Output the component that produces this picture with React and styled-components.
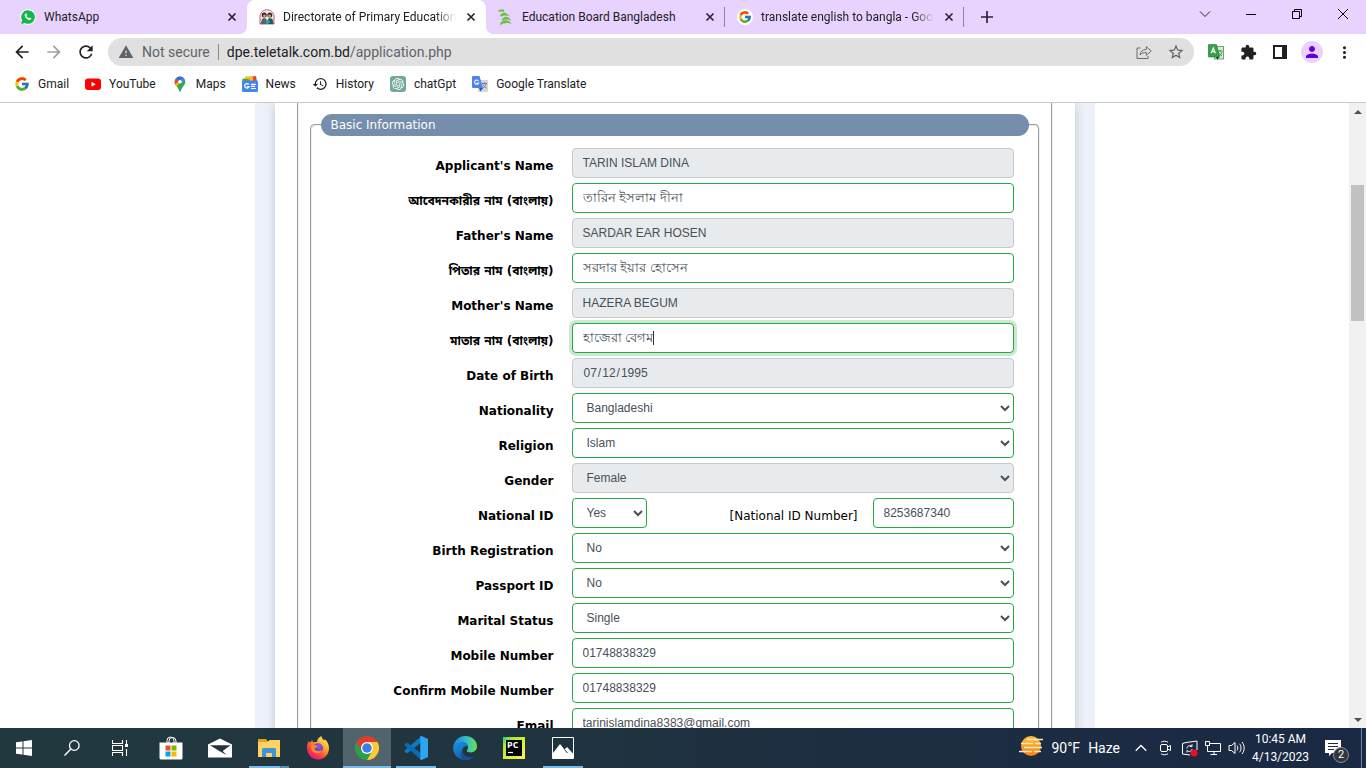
import React from "react";
import styled, { createGlobalStyle } from "styled-components";
import { FcGoogle } from "react-icons/fc";
import { MdExtension, MdPerson, MdHistory, MdStarBorder, MdWarning, MdArrowBack, MdArrowForward, MdRefresh, MdMoreVert } from "react-icons/md";
import { SiOpenai } from "react-icons/si";

const GlobalStyle = createGlobalStyle`
  *, *::before, *::after { box-sizing: border-box; }
  html, body { margin: 0; height: 100%; overflow: hidden; }
  body { font-family: "Segoe UI", Roboto, sans-serif; font-size: 12px; color: #202124; background: #fff; }
  button, input, select { font-family: inherit; font-size: inherit; color: inherit; }
  button { border: 0; padding: 0; margin: 0; background: none; display: inline-flex; align-items: center; justify-content: center; }
  a { color: inherit; text-decoration: none; }
  svg { display: block; flex: none; }
`;

const Screen = styled.div`
  display: flex;
  flex-direction: column;
  height: 100vh;
`;

/* ---------- tab strip ---------- */
const TabStrip = styled.header`
  display: flex;
  height: 34px;
  flex: none;
  padding-left: 8px;
  background: #e8d3ff;
`;
const Tab = styled.div`
  position: relative;
  display: flex;
  align-items: center;
  gap: 8px;
  width: 239px;
  height: 34px;
  padding: 0 8px 0 12px;
  border-radius: 8px 8px 0 0;
  background: ${(p) => (p.$active ? "#fff" : "transparent")};
  ${(p) =>
    p.$active &&
    `
    &::before, &::after {
      content: "";
      position: absolute;
      bottom: 0;
      width: 8px;
      height: 8px;
    }
    &::before { left: -8px; background: radial-gradient(circle at 0 0, transparent 8px, #fff 8px); }
    &::after { right: -8px; background: radial-gradient(circle at 100% 0, transparent 8px, #fff 8px); }
  `}
  ${(p) =>
    p.$divider &&
    `
    &::after {
      content: "";
      position: absolute;
      right: 0;
      top: 7px;
      width: 1px;
      height: 20px;
      background: #8e7fa3;
    }
  `}
`;
const TabTitle = styled.span`
  flex: 1;
  min-width: 0;
  overflow: hidden;
  white-space: nowrap;
  ${(p) => p.$fade && "mask-image: linear-gradient(to right, #000 88%, transparent);"}
`;
const TabClose = styled.button`
  width: 14px;
  height: 14px;
`;
const NewTab = styled.button`
  width: 28px;
  height: 34px;
  margin-left: 9px;
`;
const WindowControls = styled.div`
  display: flex;
  margin-left: auto;
`;
const WindowButton = styled.button`
  width: 46px;
  height: 28px;
`;

/* ---------- toolbar ---------- */
const Toolbar = styled.div`
  display: flex;
  align-items: center;
  height: 36px;
  flex: none;
  padding: 0 6px;
`;
const ToolButton = styled.button`
  width: 32px;
  height: 32px;
  color: ${(p) => (p.$muted ? "#a0a0a0" : "#202124")};
`;
const Omnibox = styled.div`
  display: flex;
  align-items: center;
  flex: 1;
  height: 28px;
  margin: 0 6px;
  padding: 0 2px 0 10px;
  border-radius: 14px;
  background: #e0e0e0;
  color: #5f6368;
  font-size: 14px;
`;
const SecurityChip = styled.button`
  gap: 8px;
  font-size: 14px;
`;
const ChipDivider = styled.span`
  width: 1px;
  height: 16px;
  margin: 0 8px;
  background: #8a8a8a;
`;
const Address = styled.span`
  flex: 1;
  white-space: nowrap;
`;
const Host = styled.span`
  color: #202124;
`;
const Avatar = styled.span`
  display: flex;
  align-items: center;
  justify-content: center;
  width: 22px;
  height: 22px;
  border-radius: 50%;
  background: #e8d3ff;
  color: #6a00d4;
`;

const Bookmarks = styled.nav`
  display: flex;
  align-items: flex-start;
  gap: 16px;
  height: 33px;
  flex: none;
  padding: 6px 14px 0;
  border-bottom: 1px solid #cacaca;
`;
const Bookmark = styled.a`
  display: flex;
  align-items: center;
  gap: 8px;
  height: 16px;
  white-space: nowrap;
`;

/* ---------- page ---------- */
const Viewport = styled.div`
  display: flex;
  flex: 1;
  min-height: 0;
`;
const Page = styled.main`
  flex: 1;
  overflow: hidden;
`;
const Shell = styled.div`
  max-width: 840px;
  margin: 0 auto;
  padding: 0 20px;
  background: #edf1fa;
`;
const Paper = styled.div`
  padding: 0 22px;
  background: #fff;
  box-shadow: 0 0 10px rgba(0, 40, 30, 0.2);
`;
const Frame = styled.form`
  padding: 11px 11px 0;
  border: 2px groove #f0f0f0;
  border-width: 0 2px;
`;
const Section = styled.fieldset`
  margin: 0;
  padding: 12px 9px;
  border: 2px groove #f0f0f0;
  border-radius: 5px;
`;
const SectionTitle = styled.legend`
  width: 100%;
  height: 22px;
  padding: 0 10px;
  border-radius: 11px;
  background: #748eac;
  color: #fff;
  font: 12px/22px Verdana, "DejaVu Sans", sans-serif;
`;
const Row = styled.div`
  display: grid;
  grid-template-columns: 233fr 442fr;
  column-gap: 18px;
  min-height: 30px;
  margin-bottom: 5px;
  padding-right: 15px;
`;
const Label = styled.label`
  padding-top: 6px;
  color: #000;
  font: bold 12px/24px Verdana, "DejaVu Sans", "Noto Sans Bengali", sans-serif;
  text-align: right;
  white-space: nowrap;
`;
const InlineLabel = styled(Label)`
  flex: 1;
  padding-right: 15px;
  font-weight: normal;
`;
const Split = styled.div`
  display: flex;
`;
const controlLook = `
  width: 100%;
  height: 30px;
  border: 1px solid #28a745;
  border-radius: 4px;
  background-color: #fff;
  color: #495057;
  font-family: Arial, "Liberation Sans", sans-serif;
  font-size: 12px;
  outline: none;
  &:disabled { border-color: #c8c8c8; background-color: #e7ebee; color: #495057; opacity: 1; }
`;
const TextInput = styled.input`
  ${controlLook}
  padding: 0 10px;
  &:lang(bn) { font-size: 13px; }
  ${(p) => p.$narrow && "width: 141px;"}
  ${(p) => p.$focused && "box-shadow: 0 0 0 3px rgba(40, 167, 69, 0.25);"}
  &::-webkit-calendar-picker-indicator { display: none; }
`;
const Select = styled.select`
  ${controlLook}
  padding: 0 0 0 10px;
  ${(p) => p.$narrow && "width: 75px;"}
`;
const CaretHolder = styled.div`
  position: relative;
`;
const Caret = styled.span`
  position: absolute;
  left: 81px;
  top: 8px;
  width: 1px;
  height: 14px;
  background: #333;
`;

const Scrollbar = styled.div`
  display: flex;
  flex-direction: column;
  width: 17px;
  flex: none;
  background: #f1f1f1;
`;
const ScrollButton = styled.button`
  width: 17px;
  height: 17px;
`;
const ScrollGap = styled.div`
  flex: ${(p) => p.$share};
`;
const ScrollThumb = styled.div`
  flex: 136;
  margin: 0 2px;
  background: #c1c1c1;
`;

/* ---------- taskbar ---------- */
const Taskbar = styled.footer`
  display: flex;
  align-items: stretch;
  height: 40px;
  flex: none;
  background: linear-gradient(to right, #22383f, #20353f 35%, #1d2d41 65%, #1a2944);
  color: #fff;
`;
const TaskGroup = styled.div`
  display: flex;
  gap: ${(p) => p.$gap || 0}px;
  margin-right: 3px;
`;
const TaskButton = styled.button`
  position: relative;
  width: 48px;
  color: #fff;
  background: ${(p) => (p.$active ? "#51646c" : "transparent")};
  ${(p) =>
    p.$line &&
    `
    &::after {
      content: "";
      position: absolute;
      bottom: 0;
      left: ${p.$active ? 0 : 4}px;
      right: ${p.$active ? 0 : 4}px;
      height: 2px;
      background: ${p.$stacked ? "linear-gradient(to right, #76b9ed 31px, #3d5a70 31px, #5d8fb5 32px)" : "#76b9ed"};
    }
  `}
`;
const Tray = styled.div`
  display: flex;
  align-items: center;
  margin-left: auto;
`;
const Weather = styled.button`
  gap: 8px;
  margin-right: 9px;
  font-size: 14px;
  white-space: nowrap;
`;
const TrayIcon = styled.button`
  width: 24px;
  height: 40px;
  color: #fff;
`;
const Clock = styled.div`
  width: 63px;
  line-height: 18px;
  text-align: center;
  white-space: nowrap;
`;
const Notifications = styled.button`
  position: relative;
  width: 42px;
  height: 40px;
  margin-right: 7px;
  color: #fff;
`;
const Badge = styled.span`
  position: absolute;
  left: 21px;
  top: 19px;
  width: 16px;
  height: 16px;
  border: 1px solid #8b919a;
  border-radius: 50%;
  background: #33373d;
  font-size: 11px;
  line-height: 14px;
`;
const ShowDesktop = styled.button`
  width: 5px;
  height: 40px;
  border-left: 1px solid #76808f;
`;

/* ---------- icons ---------- */
const Svg = ({ s = 16, w, h, vb, children }) => (
  <svg width={w || s} height={h || s} viewBox={vb || `0 0 ${w || s} ${h || s}`} fill="none" aria-hidden="true">
    {children}
  </svg>
);
const CloseIcon = () => (
  <Svg s={10}><path d="M1.5 1.5l7 7M8.5 1.5l-7 7" stroke="#2b2333" strokeWidth="1.7" /></Svg>
);
const WhatsAppIcon = () => (
  <Svg s={16}>
    <circle cx="8" cy="8" r="7.8" fill="#fff" />
    <path d="M8 1.2a6.8 6.8 0 1 1-3.3 12.7L1.2 14.9l1-3.4A6.8 6.8 0 0 1 8 1.2z" fill="#12b84a" />
    <path d="M5.7 4.6l1 .2.6 1.5-.6.9c.5 1 1.2 1.6 2.2 2.1l.8-.8 1.6.8c.1 1.2-.8 1.8-1.8 1.7C7 10.7 4.9 8.4 4.6 6.5c-.1-.8.5-1.7 1.1-1.9z" fill="#fff" />
  </Svg>
);
const SchoolIcon = () => (
  <Svg s={16}>
    <path d="M1 15V6.5C2 2.5 5 .8 8 .8s6 1.7 7 5.7V15z" fill="#f7e9ee" stroke="#b8637f" />
    <circle cx="5.2" cy="6" r="2.5" fill="#2e2422" />
    <circle cx="10.8" cy="6" r="2.5" fill="#3a2927" />
    <circle cx="5.4" cy="6.8" r="1.4" fill="#d79e7c" />
    <circle cx="10.6" cy="6.8" r="1.4" fill="#d79e7c" />
    <path d="M1.500 15l1.500-5 2-1 2.500 1 .5 5z" fill="#5d6364" />
    <path d="M8.500 15l.5-5 2-1 2.500 1 1 5z" fill="#1e5f4e" />
    <path d="M7 11.500l3-1 1 3-3 1.500z" fill="#1f9fd2" />
  </Svg>
);
const BoardIcon = () => (
  <Svg s={16}>
    <path d="M0 1L5.500.2 6.500 3.500C4.800 2.300 3 2.200 1.800 3.200zM2 6.500C4.500 2.600 8.500 2.800 11.700 7.600 8.500 6 5.500 6.300 3.200 7.800z" fill="#6cbf3f" />
    <path d="M3.800 10.500C6.500 6.600 10.800 6.800 13.300 12.200 10 9.800 7.300 9.900 4.800 11.800z" fill="#6cbf3f" />
    <path d="M1.800 15.500C4 10.200 10 9.800 13.700 15 9.500 13.400 5.500 13.800 2.600 16z" fill="#6cbf3f" />
  </Svg>
);
const GoogleTabIcon = () => (
  <Svg s={16}>
    <circle cx="8" cy="8" r="8" fill="#fff" />
    <svg x="1" y="1" width="14" height="14"><FcGoogle size={14} /></svg>
  </Svg>
);
const YoutubeIcon = () => (
  <Svg s={16}>
    <rect y="2.500" width="16" height="11.500" rx="3" fill="#f00" />
    <path d="M6.500 5.800v4.900l4.100-2.400z" fill="#fff" />
  </Svg>
);
const MapsIcon = () => (
  <Svg s={16}>
    <path d="M8 .5a5.300 5.300 0 0 1 5.300 5.300c0 4-3.600 5.200-4.500 9.200-.2.700-1.400.7-1.600 0-.9-4-4.500-5.200-4.500-9.200A5.300 5.300 0 0 1 8 .5z" fill="#34a853" />
    <path d="M2.700 5.800C2.700 3 5 .5 8 .5c1.500 0 2.900.6 3.900 1.700L4.500 10.500C3.500 9.200 2.700 7.900 2.700 5.800z" fill="#fbbc04" />
    <path d="M2.700 5.800c0-1.300.4-2.500 1.200-3.400L6.700 5 3.500 8.500c-.5-.8-.8-1.600-.8-2.700z" fill="#ea4335" />
    <path d="M3.900 2.400A5.300 5.300 0 0 1 11.900 2.200L9.300 4.700 6.700 5z" fill="#1a73e8" />
    <path d="M9.700 1a5.300 5.300 0 0 1 3.200 2.900L9.800 7.200 8 4z" fill="#4285f4" />
    <circle cx="8" cy="5.800" r="1.800" fill="#fff" />
  </Svg>
);
const NewsIcon = () => (
  <Svg s={16}>
    <path d="M3 1.500L14 0l1 6H2z" fill="#ea4335" />
    <path d="M3 .5h8v6H3z" fill="#fbbc04" />
    <path d="M.5 2.500l7 1V8h-7z" fill="#34a853" />
    <rect y="4.500" width="16" height="11.500" rx="1.200" fill="#4285f4" />
    <path d="M6.900 8.500A2.300 2.300 0 1 0 7.200 10.600H4.900" stroke="#fff" strokeWidth="1.200" />
    <path d="M9 8.300h5M9 10.400h4M9 12.500h5" stroke="#fff" strokeWidth="1.200" />
  </Svg>
);
const ChatIcon = () => (
  <Svg s={16}>
    <rect width="16" height="16" rx="3" fill="#74aa9c" />
    <svg x="2" y="2" width="12" height="12" color="#fff"><SiOpenai size={12} /></svg>
  </Svg>
);
const TranslateIcon = () => (
  <Svg s={16}>
    <rect x="6" y="4" width="10" height="12" rx="1" fill="#d6d6d6" />
    <path d="M10 7.500h5M12.500 6.500v1M14 8c-.5 2-2 3.500-3.500 4M11 8.500c.6 1.500 2 3 3.500 3.500" stroke="#667c92" />
    <path d="M1 0h6.500l3.500 12H1a1 1 0 0 1-1-1V1a1 1 0 0 1 1-1z" fill="#4c84ec" />
    <path d="M7 12h4l-2.500 3.500z" fill="#2850a7" />
    <path d="M6.500 5A2.100 2.100 0 1 0 6.600 7H4.700" stroke="#fff" strokeWidth="1.100" />
  </Svg>
);
const ShareIcon = () => (
  <Svg s={16}>
    <path d="M4.500 4H1v10.500h11V12" stroke="#6b6b6b" />
    <path d="M4 11c.4-3.400 2.400-5.400 6.300-5.500V2.700l5 4.300-5 4.300V8.600C7.500 8.500 5.600 9 4 11z" stroke="#6b6b6b" strokeLinejoin="round" />
  </Svg>
);
const TranslateExtIcon = () => (
  <Svg s={16}>
    <rect x="6.500" y="2.500" width="9" height="12.500" fill="#d5ecd3" stroke="#66a76b" />
    <path d="M9.500 7h5M12 6v1.500M14 8c-.5 1.500-1.500 3-3 3.600M10.500 9l3.500 3" stroke="#467f59" />
    <path d="M1 .5h7.500l3 12.500H1a.8.8 0 0 1-.8-.8V1.300A.8.8 0 0 1 1 .5z" fill="#37a349" stroke="#24723a" strokeWidth=".6" />
    <path d="M8 13h3.500l-2.300 2.800z" fill="#153f1b" />
    <path d="M3.200 9.200L5.300 4l2.100 5.200M3.900 7.700h2.800" stroke="#fff" strokeWidth="1.200" />
  </Svg>
);
const SidePanelIcon = () => (
  <Svg s={14}><rect x="1" y="1" width="12" height="12" stroke="#202124" strokeWidth="2" /><path d="M9 1h4v12H9z" fill="#202124" /></Svg>
);
const WindowsIcon = () => (
  <Svg s={16}><path d="M0 2.300L6.500 1.400v6.100H0zM7.500 1.200L16 0v7.500H7.500zM0 8.500h6.500v6.100L0 13.700zM7.500 8.500H16V16l-8.500-1.200z" fill="#fff" /></Svg>
);
const SearchIcon = () => (
  <Svg s={16}><circle cx="10.300" cy="5.500" r="4.800" stroke="#fff" strokeWidth="1.300" /><path d="M6.900 9.100L.5 15.500" stroke="#fff" strokeWidth="1.400" /></Svg>
);
const TaskViewIcon = () => (
  <Svg s={16}><path d="M.5 0v3.500h10V0M.5 16v-3.500h10V16M.5 5.500h10v5H.5zM14.500 0v4M14.500 9v7" stroke="#fff" strokeWidth="1.100" /><path d="M13 4h3v3h-3z" fill="#fff" /></Svg>
);
const StoreIcon = () => (
  <Svg w={24} h={24}>
    <path d="M8 7V4.500a3.500 3.500 0 0 1 7 0V7M10 7V5a3.500 3.500 0 0 1 7 0v2" stroke="#fff" />
    <path d="M.5 6.500h23V22a1.500 1.500 0 0 1-1.500 1.500H2A1.500 1.500 0 0 1 .5 22z" fill="#fff" />
    <path d="M6.500 9.500h5v5h-5z" fill="#f25022" /><path d="M12.500 9.500h5v5h-5z" fill="#7fba00" />
    <path d="M6.500 15.500h5v5h-5z" fill="#00a4ef" /><path d="M12.500 15.500h5v5h-5z" fill="#ffb900" />
  </Svg>
);
const MailIcon = () => (
  <Svg w={24} h={20}>
    <path d="M0 6.500L12 .5l12 6V19.500H0z" fill="#fff" /><path d="M2 7.200h20.500l-7.800 5.800 3.800 4L11.300 13z" fill="#21353e" />
  </Svg>
);
const ExplorerIcon = () => (
  <Svg w={22} h={20}>
    <path d="M0 1h8l1.500 2H22v16H0z" fill="#e8a317" /><path d="M0 4h10l1.500-2H22v17H0z" fill="#ffd264" />
    <path d="M4 19v-7.500A1.500 1.500 0 0 1 5.500 10h11a1.500 1.500 0 0 1 1.500 1.500V19h-4v-4H8v4z" fill="#3f94d8" />
  </Svg>
);
const FirefoxIcon = () => (
  <Svg s={24}>
    <defs>
      <linearGradient id="ffBody" x1="20" y1="2" x2="5" y2="22" gradientUnits="userSpaceOnUse"><stop stopColor="#fff14f" /><stop offset=".4" stopColor="#ff9a26" /><stop offset=".7" stopColor="#ff3f45" /><stop offset="1" stopColor="#e3167c" /></linearGradient>
      <radialGradient id="ffGlobe" cx=".6" cy=".3" r=".8"><stop stopColor="#9059ff" /><stop offset="1" stopColor="#4c2e9c" /></radialGradient>
    </defs>
    <path d="M1 11c0-2.500 1-5 2-6l.8 1.700C4.600 6 5.500 5.500 6 4l1.300 2.400c1.200-.4 2.600-.4 3.500-.2.300-2.400 1.600-4.500 4.700-6.200-.2 2 1.300 3.300 2.600 4.500l.7-1.300C21.500 5.500 23 8.500 23 12.300A11.200 11.200 0 0 1 12 23.500 11.300 11.300 0 0 1 1 11z" fill="url(#ffBody)" />
    <circle cx="12" cy="12.200" r="5" fill="url(#ffGlobe)" />
    <path d="M5.500 8.500c2 .8 4 .8 6.300 1.200-1 2-3.500 2-3.200 3.400.5 2 4 3 8.200.7-1.500 4.500-8.900 5.200-11.200.2-.8-1.700-.9-3.700-.1-5.500z" fill="#ff8a1f" />
  </Svg>
);
const ChromeIcon = () => (
  <Svg s={24} vb="0 0 48 48">
    <path d="M24 24L3.200 12A24 24 0 0 0 24 48L34.400 30z" fill="#2b9f4b" />
    <path d="M24 12h20.800A24 24 0 0 1 24 48l10.400-18z" fill="#fcc934" />
    <path d="M24 24L13.600 30 3.200 12A24 24 0 0 1 44.800 12H24z" fill="#e33b2e" />
    <circle cx="24" cy="24" r="12" fill="#fff" /><circle cx="24" cy="24" r="9.500" fill="#3b7de9" />
  </Svg>
);
const VsCodeIcon = () => (
  <Svg s={24}>
    <path d="M17.500 0v6.200L3.300 17.200.6 15.800v-1.400z" fill="#0f7ac4" />
    <path d="M.6 8.100L3.300 6.800l14.200 11V24L.6 9.600z" fill="#0b6cb4" />
    <path d="M17.500 0L24 3v18l-6.500 3c-.8 0-1.200-.4-1.200-1V1c0-.6.4-1 1.200-1z" fill="#2ba7f0" />
  </Svg>
);
const EdgeIcon = () => (
  <Svg s={24}>
    <defs>
      <linearGradient id="edgeTop" x1="1" y1="8" x2="24" y2="9" gradientUnits="userSpaceOnUse"><stop stopColor="#1b86d6" /><stop offset=".55" stopColor="#35c1c8" /><stop offset="1" stopColor="#6de048" /></linearGradient>
      <linearGradient id="edgeLow" x1="2" y1="8" x2="12" y2="24" gradientUnits="userSpaceOnUse"><stop stopColor="#1d8ad8" /><stop offset="1" stopColor="#0c5ba9" /></linearGradient>
    </defs>
    <path d="M.2 11C1 4.500 6 0 12.200 0 19 0 24 4.800 24 10.300c0 4-3 6.200-6.200 6.200-2.500 0-4-.8-4-1.700 0-.7 1.200-1 1.200-3.300 0-2.700-2.700-4.800-6-4.800-3.800 0-7 1.800-8.800 4.300z" fill="url(#edgeTop)" />
    <path d="M.1 12C.2 8 4.500 5.700 9 5.700c3.500 0 6 2 6.200 4.600-1.500-1-5-.2-5.800 3.200-.9 4 3 7.800 7.600 7.800 2 0 3.500-.6 4.600-1.300C19.500 22.500 16 24 12.200 24 5.500 24 0 18.500.1 12z" fill="url(#edgeLow)" />
    <path d="M9.200 14.500c-.4 3.900 3.300 7 7.800 6.800 2 0 3.500-.6 4.600-1.300-2 2.800-5.500 4-8.800 4-4.500-.6-6.500-5.200-3.600-9.500z" fill="#1b4e94" />
  </Svg>
);
const PyCharmIcon = () => (
  <Svg s={22}>
    <defs><linearGradient id="pycharm" x1="0" y1="0" x2="1" y2="1"><stop stopColor="#21d789" /><stop offset=".25" stopColor="#b5e831" /><stop offset="1" stopColor="#fcf84a" /></linearGradient></defs>
    <path d="M0 0h22v22H0z" fill="url(#pycharm)" /><path d="M3 3h16v16H3z" fill="#000" />
    <text x="4" y="11" fill="#fff" fontFamily="Open Sans, sans-serif" fontWeight="bold" fontSize="9">PC</text>
    <path d="M5 15.500h5" stroke="#fff" strokeWidth="1.200" />
  </Svg>
);
const PhotosIcon = () => (
  <Svg s={22}><path d="M.5.500h21v21H.5z" stroke="#fff" /><path d="M1 16L8 7l4.500 5.500L15 10l6 6.500V21H1z" fill="#fff" /><path d="M12.500 12.500l3 3.500" stroke="#21353e" /></Svg>
);
const HazeIcon = () => (
  <Svg s={24}>
    <defs><linearGradient id="haze" x1="0" y1="0" x2="0" y2="1"><stop stopColor="#ffc22b" /><stop offset="1" stopColor="#f28118" /></linearGradient></defs>
    <circle cx="12" cy="10" r="10" fill="url(#haze)" />
    <path d="M8 3.500h16M2 7.500h12M16 7.500h6M5 11.500h18M0 15.500h13M15 15.500h7" stroke="#fbe7c8" strokeWidth="1.500" />
  </Svg>
);
const ChevronUp = () => <Svg w={12} h={8}><path d="M.7 6.800L6 1.500l5.300 5.300" stroke="#fff" strokeWidth="1.300" /></Svg>;
const MeetIcon = () => (
  <Svg s={16}><rect x="3.500" y="4.500" width="7" height="7" rx="1.500" stroke="#fff" /><path d="M10.500 7l3-1.500v5l-3-1.500M4 2.200c2-1.300 5-1.300 7 0M4 13.800c2 1.300 5 1.300 7 0" stroke="#fff" /></Svg>
);
const SyncIcon = () => (
  <Svg s={17}><path d="M1.500 3.500L5 2.500l11-1.500v9M1.500 3.500v10.500l7.500 1M6 8.500c0-2.500 3-4 5-2V4.300M11 9c0 2-3 3.500-5 1.500v2M11 6.500H8.800" stroke="#fff" /><circle cx="13" cy="13" r="3.500" fill="#e81123" /></Svg>
);
const NetworkIcon = () => (
  <Svg s={16}><path d="M4 3.500h11.500v8H2.500V6M9 11.500V14M5.500 14.500H12" stroke="#fff" /><path d="M.5 1.500h4v4h-4z" fill="#1b2b43" stroke="#fff" /></Svg>
);
const VolumeIcon = () => (
  <Svg w={18} h={16}><path d="M1 5.500h2.500L7 2.500v11l-3.500-3H1zM9 5.500c1 1.400 1 3.600 0 5M11.500 3.800c2 2.500 2 6 0 8.500M14 2c2.900 3.500 2.900 8.600 0 12" stroke="#fff" /></Svg>
);
const NoteIcon = () => (
  <Svg s={16}><path d="M0 0h16v13H7l-3 3v-3H0z" fill="#fff" /><path d="M3 3.500h10M3 6.500h10M3 9.500h6" stroke="#1a2944" /></Svg>
);

/* ---------- data ---------- */
const tabs = [
  { title: "WhatsApp", icon: <WhatsAppIcon /> },
  { title: "Directorate of Primary Education", icon: <SchoolIcon />, active: true, fade: true },
  { title: "Education Board Bangladesh", icon: <BoardIcon />, divider: true },
  { title: "translate english to bangla - Goo", icon: <GoogleTabIcon />, fade: true, divider: true },
];
const bookmarks = [
  ["Gmail", <FcGoogle size={16} />],
  ["YouTube", <YoutubeIcon />],
  ["Maps", <MapsIcon />],
  ["News", <NewsIcon />],
  ["History", <MdHistory size={16} />],
  ["chatGpt", <ChatIcon />],
  ["Google Translate", <TranslateIcon />],
];
const fields = [
  { id: "name", label: "Applicant's Name", value: "TARIN ISLAM DINA", disabled: true },
  { id: "name-bn", label: "আবেদনকারীর নাম (বাংলায়)", value: "তারিন ইসলাম দীনা", lang: "bn" },
  { id: "father", label: "Father's Name", value: "SARDAR EAR HOSEN", disabled: true },
  { id: "father-bn", label: "পিতার নাম (বাংলায়)", value: "সরদার ইয়ার হোসেন", lang: "bn" },
  { id: "mother", label: "Mother's Name", value: "HAZERA BEGUM", disabled: true },
  { id: "mother-bn", label: "মাতার নাম (বাংলায়)", value: "হাজেরা বেগম", lang: "bn", focused: true },
  { id: "dob", label: "Date of Birth", value: "1995-07-12", type: "date", disabled: true },
  { id: "nationality", label: "Nationality", value: "Bangladeshi", select: true },
  { id: "religion", label: "Religion", value: "Islam", select: true },
  { id: "gender", label: "Gender", value: "Female", select: true, disabled: true },
  { id: "nid", label: "National ID", value: "Yes", select: true, extra: { label: "[National ID Number]", value: "8253687340" } },
  { id: "birth", label: "Birth Registration", value: "No", select: true },
  { id: "passport", label: "Passport ID", value: "No", select: true },
  { id: "marital", label: "Marital Status", value: "Single", select: true },
  { id: "mobile", label: "Mobile Number", value: "01748838329" },
  { id: "mobile2", label: "Confirm Mobile Number", value: "01748838329" },
  { id: "email", label: "Email", value: "tarinislamdina8383@gmail.com" },
];
const apps = [
  { name: "Microsoft Store", icon: <StoreIcon /> },
  { name: "Mail", icon: <MailIcon /> },
  { name: "File Explorer", icon: <ExplorerIcon />, line: true, stacked: true },
  { name: "Firefox", icon: <FirefoxIcon /> },
  { name: "Chrome", icon: <ChromeIcon />, line: true, active: true },
  { name: "Visual Studio Code", icon: <VsCodeIcon />, line: true },
  { name: "Edge", icon: <EdgeIcon /> },
  { name: "PyCharm", icon: <PyCharmIcon /> },
  { name: "Photos", icon: <PhotosIcon />, line: true },
];

function Field({ f }) {
  let control;
  if (f.select) {
    control = (
      <Select id={f.id} defaultValue={f.value} disabled={f.disabled} $narrow={!!f.extra}>
        <option>{f.value}</option>
      </Select>
    );
  } else {
    control = <TextInput id={f.id} type={f.type || "text"} lang={f.lang} defaultValue={f.value} disabled={f.disabled} $focused={f.focused} />;
  }
  if (f.focused) {
    control = <CaretHolder>{control}<Caret /></CaretHolder>;
  }
  if (f.extra) {
    control = (
      <Split>
        {control}
        <InlineLabel htmlFor={`${f.id}-number`}>{f.extra.label}</InlineLabel>
        <TextInput id={`${f.id}-number`} defaultValue={f.extra.value} $narrow />
      </Split>
    );
  }
  return (
    <Row>
      <Label htmlFor={f.id}>{f.label}</Label>
      {control}
    </Row>
  );
}

export default function App() {
  return (
    <Screen>
      <GlobalStyle />
      <TabStrip>
        {tabs.map((t) => (
          <Tab key={t.title} $active={t.active} $divider={t.divider}>
            {t.icon}
            <TabTitle $fade={t.fade}>{t.title}</TabTitle>
            <TabClose aria-label="Close tab"><CloseIcon /></TabClose>
          </Tab>
        ))}
        <NewTab aria-label="New tab"><Svg s={12}><path d="M6 0v12M0 6h12" stroke="#2b2333" strokeWidth="1.7" /></Svg></NewTab>
        <WindowControls>
          <WindowButton aria-label="Search tabs"><Svg w={12} h={8}><path d="M1 1.500l5 5 5-5" stroke="#2b2333" /></Svg></WindowButton>
          <WindowButton aria-label="Minimize"><Svg s={10}><path d="M0 5.500h10" stroke="#000" /></Svg></WindowButton>
          <WindowButton aria-label="Restore"><Svg s={10}><path d="M.5 2.500h7v7h-7zM2.500 2.500v-2h7v7h-2" stroke="#000" /></Svg></WindowButton>
          <WindowButton aria-label="Close"><Svg s={10}><path d="M0 0l10 10M10 0L0 10" stroke="#000" /></Svg></WindowButton>
        </WindowControls>
      </TabStrip>
      <Toolbar>
        <ToolButton aria-label="Back"><MdArrowBack size={20} /></ToolButton>
        <ToolButton aria-label="Forward" $muted><MdArrowForward size={20} /></ToolButton>
        <ToolButton aria-label="Reload"><MdRefresh size={20} /></ToolButton>
        <Omnibox>
          <SecurityChip><MdWarning size={16} />Not secure</SecurityChip>
          <ChipDivider />
          <Address><Host>dpe.teletalk.com.bd</Host>/application.php</Address>
          <ToolButton aria-label="Share"><ShareIcon /></ToolButton>
          <ToolButton aria-label="Bookmark this page"><MdStarBorder size={18} color="#5f6368" /></ToolButton>
        </Omnibox>
        <ToolButton aria-label="Translate"><TranslateExtIcon /></ToolButton>
        <ToolButton aria-label="Extensions"><MdExtension size={17} /></ToolButton>
        <ToolButton aria-label="Side panel"><SidePanelIcon /></ToolButton>
        <ToolButton aria-label="Profile"><Avatar><MdPerson size={18} /></Avatar></ToolButton>
        <ToolButton aria-label="Menu"><MdMoreVert size={19} /></ToolButton>
      </Toolbar>
      <Bookmarks>
        {bookmarks.map(([name, icon]) => (
          <Bookmark key={name} href="#">{icon}{name}</Bookmark>
        ))}
      </Bookmarks>
      <Viewport>
        <Page>
          <Shell>
            <Paper>
              <Frame>
                <Section>
                  <SectionTitle>Basic Information</SectionTitle>
                  {fields.map((f) => <Field key={f.id} f={f} />)}
                </Section>
              </Frame>
            </Paper>
          </Shell>
        </Page>
        <Scrollbar>
          <ScrollButton aria-label="Scroll up"><Svg w={8} h={4}><path d="M4 0l4 4H0z" fill="#505050" /></Svg></ScrollButton>
          <ScrollGap $share={65} />
          <ScrollThumb />
          <ScrollGap $share={390} />
          <ScrollButton aria-label="Scroll down"><Svg w={8} h={4}><path d="M4 4l4-4H0z" fill="#505050" /></Svg></ScrollButton>
        </Scrollbar>
      </Viewport>
      <Taskbar>
        <TaskGroup>
          <TaskButton aria-label="Start"><WindowsIcon /></TaskButton>
          <TaskButton aria-label="Search"><SearchIcon /></TaskButton>
          <TaskButton aria-label="Task view"><TaskViewIcon /></TaskButton>
        </TaskGroup>
        <TaskGroup $gap={1}>
          {apps.map((a) => (
            <TaskButton key={a.name} aria-label={a.name} $line={a.line} $active={a.active} $stacked={a.stacked}>{a.icon}</TaskButton>
          ))}
        </TaskGroup>
        <Tray>
          <Weather><HazeIcon /><span>90°F</span><span>Haze</span></Weather>
          <TrayIcon aria-label="Show hidden icons"><ChevronUp /></TrayIcon>
          <TrayIcon aria-label="Meet now"><MeetIcon /></TrayIcon>
          <TrayIcon aria-label="Sync"><SyncIcon /></TrayIcon>
          <TrayIcon aria-label="Network"><NetworkIcon /></TrayIcon>
          <TrayIcon aria-label="Volume"><VolumeIcon /></TrayIcon>
          <Clock>10:45 AM<br />4/13/2023</Clock>
          <Notifications aria-label="Notifications"><NoteIcon /><Badge>2</Badge></Notifications>
          <ShowDesktop aria-label="Show desktop" />
        </Tray>
      </Taskbar>
    </Screen>
  );
}
